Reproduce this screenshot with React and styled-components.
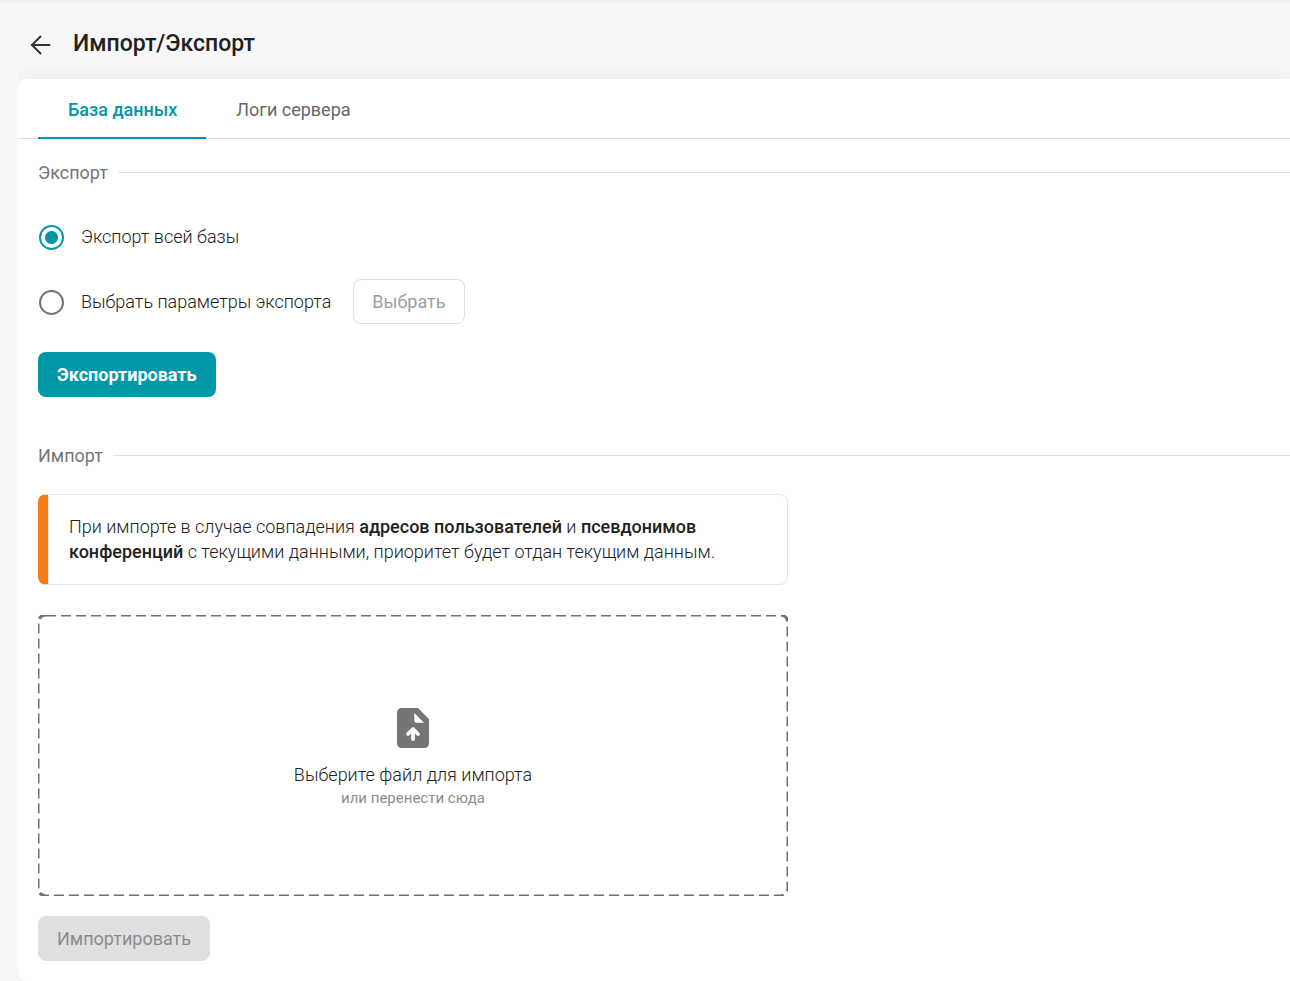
import { useState } from "react";
import styled, { createGlobalStyle } from "styled-components";

const App = () => {
    const [mode, setMode] = useState("all");

    return (
        <>
            <GlobalStyle />
            <Page>
                <Header>
                    <BackButton type="button" aria-label="Назад">
                        <svg width="21" height="22" viewBox="0 0 21 22" fill="none" stroke="currentColor" strokeWidth="2" strokeLinecap="round">
                            <path d="M19.5 11H2" />
                            <path d="M10.5 2.5L2 11l8.500 8.500" />
                        </svg>
                    </BackButton>
                    <Title>Импорт/Экспорт</Title>
                </Header>
                <Clip>
                    <Card>
                        <Tabs>
                            <Tab href="#database" $active>База данных</Tab>
                            <Tab href="#logs">Логи сервера</Tab>
                        </Tabs>
                        <Content>
                            <SectionTitle>Экспорт</SectionTitle>
                            <Options>
                                <Option>
                                    <Radio
                                        type="radio"
                                        name="mode"
                                        id="mode-all"
                                        checked={mode === "all"}
                                        onChange={() => setMode("all")}
                                    />
                                    <OptionLabel htmlFor="mode-all">Экспорт всей базы</OptionLabel>
                                </Option>
                                <Option>
                                    <Radio
                                        type="radio"
                                        name="mode"
                                        id="mode-params"
                                        checked={mode === "params"}
                                        onChange={() => setMode("params")}
                                    />
                                    <OptionLabel htmlFor="mode-params">Выбрать параметры экспорта</OptionLabel>
                                    <OutlineButton type="button" disabled={mode === "all"}>Выбрать</OutlineButton>
                                </Option>
                            </Options>
                            <Button type="button">Экспортировать</Button>

                            <ImportSection>
                                <SectionTitle>Импорт</SectionTitle>
                                <Note>
                                    При импорте в случае совпадения <b>адресов пользователей</b> и{" "}
                                    <b>псевдонимов конференций</b> с текущими данными, приоритет будет отдан
                                    текущим данным.
                                </Note>
                                <DropZone>
                                    <FileInput type="file" />
                                    <Outline>
                                        <rect width="100%" height="100%" rx="8" ry="8" />
                                    </Outline>
                                    <FileIcon />
                                    <DropTitle>Выберите файл для импорта</DropTitle>
                                    <DropHint>или перенести сюда</DropHint>
                                </DropZone>
                                <Button type="button" disabled>Импортировать</Button>
                            </ImportSection>
                        </Content>
                    </Card>
                </Clip>
            </Page>
        </>
    );
}

const FileIcon = () => (
    <svg width="34" height="40" viewBox="0 0 34 40" aria-hidden="true">
        <path
            fill="#757575"
            d="M5.5 0H22L33 11V35.5a4.5 4.5 0 0 1-4.5 4.5H5.5A4.5 4.5 0 0 1 1 35.5V4.5A4.5 4.5 0 0 1 5.5 0z"
        />
        <path fill="#fff" d="M18.3 5v7.500a2.200 2.200 0 0 0 2.200 2.200H28z" />
        <path
            fill="none"
            stroke="#fff"
            strokeWidth="3.8"
            strokeLinecap="round"
            strokeLinejoin="round"
            d="M17 31V22M12 26l5-5 5 5"
        />
    </svg>
);

const GlobalStyle = createGlobalStyle`
    * {
        box-sizing: border-box;
    }

    body {
        margin: 0;
        background-color: #f7f7f7;
        color: #212121;
        font-family: Roboto, "Liberation Sans", sans-serif;
        font-size: 18px;
        line-height: 25px;
        font-weight: 300;
    }

    button, input {
        font: inherit;
    }
`;

const Page = styled.main`
    padding-left: 18px;
    box-shadow: inset 0 4px 4px -3px rgba(0, 0, 0, 0.06);
`;

const Header = styled.header`
    display: flex;
    align-items: center;
    gap: 22px;
    height: 79px;
    padding: 10px 12px 0;
`;

const BackButton = styled.button`
    display: flex;
    padding: 0;
    border: none;
    background: none;
    color: #333;
    cursor: pointer;
`;

const Title = styled.h1`
    margin: 0;
    padding-bottom: 2px;
    font-size: 23px;
    line-height: 28px;
    font-weight: 500;
`;

/* cuts the card shadow on the sides and leaves it above */
const Clip = styled.div`
    clip-path: inset(-30px 0 0 0);
`;

const Card = styled.section`
    background-color: white;
    border-radius: 8px 0 0 8px;
    box-shadow: 0 0 22px rgba(0, 0, 0, 0.08);
`;

const Tabs = styled.nav`
    display: flex;
    height: 60px;
    padding-left: 20px;
    border-bottom: 1px solid #dedede;
`;

const Tab = styled.a`
    height: 60px;
    padding: 18px 29px 0 30px;
    border-bottom: 2px solid ${({ $active }) => ($active ? "#0097a7" : "transparent")};
    color: ${({ $active }) => ($active ? "#0097a7" : "#666")};
    font-weight: ${({ $active }) => ($active ? 500 : 400)};
    text-decoration: none;
`;

const Content = styled.div`
    padding: 21px 0 20px 20px;
`;

const SectionTitle = styled.h2`
    display: flex;
    align-items: center;
    gap: 10px;
    margin: 0;
    color: #757575;
    font-size: 18px;
    font-weight: 400;

    &::after {
        content: "";
        flex: 1;
        height: 1px;
        background-color: #dedede;
    }
`;

const Options = styled.div`
    display: flex;
    flex-direction: column;
    gap: 20px;
    padding: 29px 0 28px;
`;

const Option = styled.div`
    display: flex;
    align-items: center;
    height: 45px;
`;

const Radio = styled.input`
    appearance: none;
    width: 25px;
    height: 25px;
    margin: 1px 17px 0 1px;
    border: 2px solid #757575;
    border-radius: 50%;
    cursor: pointer;

    &:checked {
        border-color: #0097a7;
        background: radial-gradient(circle, #0097a7 6px, transparent 7px);
    }
`;

const OptionLabel = styled.label`
    cursor: pointer;
`;

const Button = styled.button`
    display: block;
    height: 45px;
    padding: 0 19px;
    border: none;
    border-radius: 8px;
    background-color: #0097a7;
    color: white;
    font-weight: 700;
    cursor: pointer;

    &:disabled {
        background-color: #e0e0e0;
        color: #8c8c8c;
        font-weight: 400;
        cursor: default;
    }
`;

const OutlineButton = styled(Button)`
    margin-left: 22px;
    padding: 0 18px;
    border: 1px solid #dedede;
    background-color: white;
    color: #0097a7;
    font-weight: 400;

    &:disabled {
        background-color: white;
        color: #9e9e9e;
    }
`;

const ImportSection = styled.div`
    padding-top: 46px;
`;

const Note = styled.p`
    max-width: 750px;
    margin: 26px 0 30px;
    padding: 19px 60px 20px 21px;
    border: 1px solid #e8e8e8;
    border-left: 10px solid #f57f17;
    border-radius: 8px;
    box-shadow: inset 1px 0 #e8e8e8;

    b {
        font-weight: 500;
    }
`;

const DropZone = styled.label`
    position: relative;
    display: flex;
    flex-direction: column;
    align-items: center;
    max-width: 750px;
    margin-bottom: 20px;
    padding: 93px 20px 86px;
    cursor: pointer;
`;

const FileInput = styled.input`
    position: absolute;
    inset: 0;
    width: 100%;
    height: 100%;
    opacity: 0;
    cursor: pointer;
`;

const Outline = styled.svg`
    position: absolute;
    inset: 0;
    width: 100%;
    height: 100%;
    pointer-events: none;

    rect {
        fill: none;
        stroke: #707070;
        stroke-width: 3px;
        stroke-dasharray: 10 5;
    }
`;

const DropTitle = styled.span`
    margin-top: 14px;
`;

const DropHint = styled.span`
    color: #8c8c8c;
    font-size: 15px;
    line-height: 23px;
    font-weight: 400;
`;

export default App;
